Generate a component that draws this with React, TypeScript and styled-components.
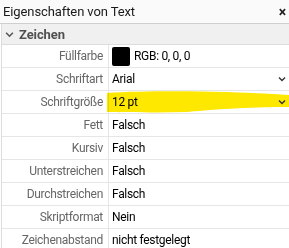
import styled, { createGlobalStyle } from 'styled-components';

const GlobalStyle = createGlobalStyle`
	html, body {
		margin: 0;
		padding: 0;
		background: #ffffff;
	}
	body {
		font-family: Roboto, 'Open Sans', sans-serif;
	}
`;

type Prop = {
	label: string;
	value: string;
	swatch?: string;
	dropdown?: boolean;
	highlight?: boolean;
};

const props: Prop[] = [
	{ label: 'Füllfarbe', value: 'RGB: 0, 0, 0', swatch: '#000000' },
	{ label: 'Schriftart', value: 'Arial', dropdown: true },
	{ label: 'Schriftgröße', value: '12 pt', dropdown: true, highlight: true },
	{ label: 'Fett', value: 'Falsch' },
	{ label: 'Kursiv', value: 'Falsch' },
	{ label: 'Unterstreichen', value: 'Falsch' },
	{ label: 'Durchstreichen', value: 'Falsch' },
	{ label: 'Skriptformat', value: 'Nein' },
	{ label: 'Zeichenabstand', value: 'nicht festgelegt' },
];

const Chevron = ({ size = 8, color = '#333' }: { size?: number; color?: string }) => (
	<svg width={size} height={size} viewBox='0 0 8 8'>
		<path d='M1 2.5 L4 5.5 L7 2.5' fill='none' stroke={color} strokeWidth='1.4' />
	</svg>
);

const Marker = () => (
	<svg width='182' height='24' viewBox='0 0 182 24' preserveAspectRatio='none'>
		<path
			d='M0 3 C30 1 80 1 120 2 C150 3 170 4 182 5 L182 17 C160 17 120 18 80 22 C50 23 20 22 0 22 Z'
			fill='#ffe800'
		/>
	</svg>
);

const App = () => {
	return (
		<>
			<GlobalStyle />
			<Panel>
				<TitleBar>
					<Title>Eigenschaften von Text</Title>
					<Close>×</Close>
				</TitleBar>
				<Body>
					<SectionHeader>
						<Chevron size={9} color='#555' />
						<span>Zeichen</span>
					</SectionHeader>
					{props.map((p) => (
						<Row key={p.label}>
							<Label>{p.label}</Label>
							<Value>
								{p.highlight && (
									<Highlight>
										<Marker />
									</Highlight>
								)}
								{p.swatch && <Swatch color={p.swatch} />}
								<ValueText>{p.value}</ValueText>
								{p.dropdown && (
									<Drop>
										<Chevron />
									</Drop>
								)}
							</Value>
						</Row>
					))}
				</Body>
			</Panel>
		</>
	);
};

const Panel = styled.div`
	width: 289px;
	height: 248px;
	overflow: hidden;
	background: #ffffff;
	font-size: 12px;
	letter-spacing: -0.3px;
`;

const TitleBar = styled.div`
	height: 23px;
	display: flex;
	align-items: center;
	justify-content: space-between;
	padding: 0 3px 0 3px;
	background: #fafafa;
	border-bottom: 1px solid #cfcfcf;
`;

const Title = styled.div`
	font-size: 13px;
	letter-spacing: -0.1px;
	color: #1a1a1a;
`;

const Close = styled.div`
	font-size: 14px;
	font-weight: 700;
	color: #222;
	line-height: 1;
`;

const Body = styled.div`
	margin-left: 1px;
	border-left: 1px solid #dcdcdc;
`;

const SectionHeader = styled.div`
	height: 20px;
	display: flex;
	align-items: center;
	gap: 5px;
	padding-left: 3px;
	background: #f0f0f0;
	border-bottom: 1px solid #dcdcdc;
	font-weight: 700;
	font-size: 13px;
	letter-spacing: -0.1px;
	color: #505050;
`;

const Row = styled.div`
	display: grid;
	grid-template-columns: 107px 1fr;
	height: 22px;
	border-bottom: 1px solid #e6e6e6;
`;

const Label = styled.div`
	display: flex;
	align-items: center;
	justify-content: flex-end;
	padding-right: 5px;
	border-right: 1px solid #e6e6e6;
	color: #666;
`;

const Value = styled.div`
	position: relative;
	display: flex;
	align-items: center;
	padding-left: 3px;
	color: #000;
`;

const Highlight = styled.div`
	position: absolute;
	left: -2px;
	top: -1px;
	mix-blend-mode: multiply;
	z-index: 0;
	display: flex;
`;

const Swatch = styled.span<{ color: string }>`
	width: 18px;
	height: 19px;
	border-radius: 2px;
	background: ${(p) => p.color};
	margin-right: 4px;
`;

const ValueText = styled.span`
	position: relative;
	z-index: 1;
	flex: 1;
`;

const Drop = styled.span`
	position: relative;
	z-index: 1;
	display: flex;
	padding-right: 3px;
`;

export default App;
